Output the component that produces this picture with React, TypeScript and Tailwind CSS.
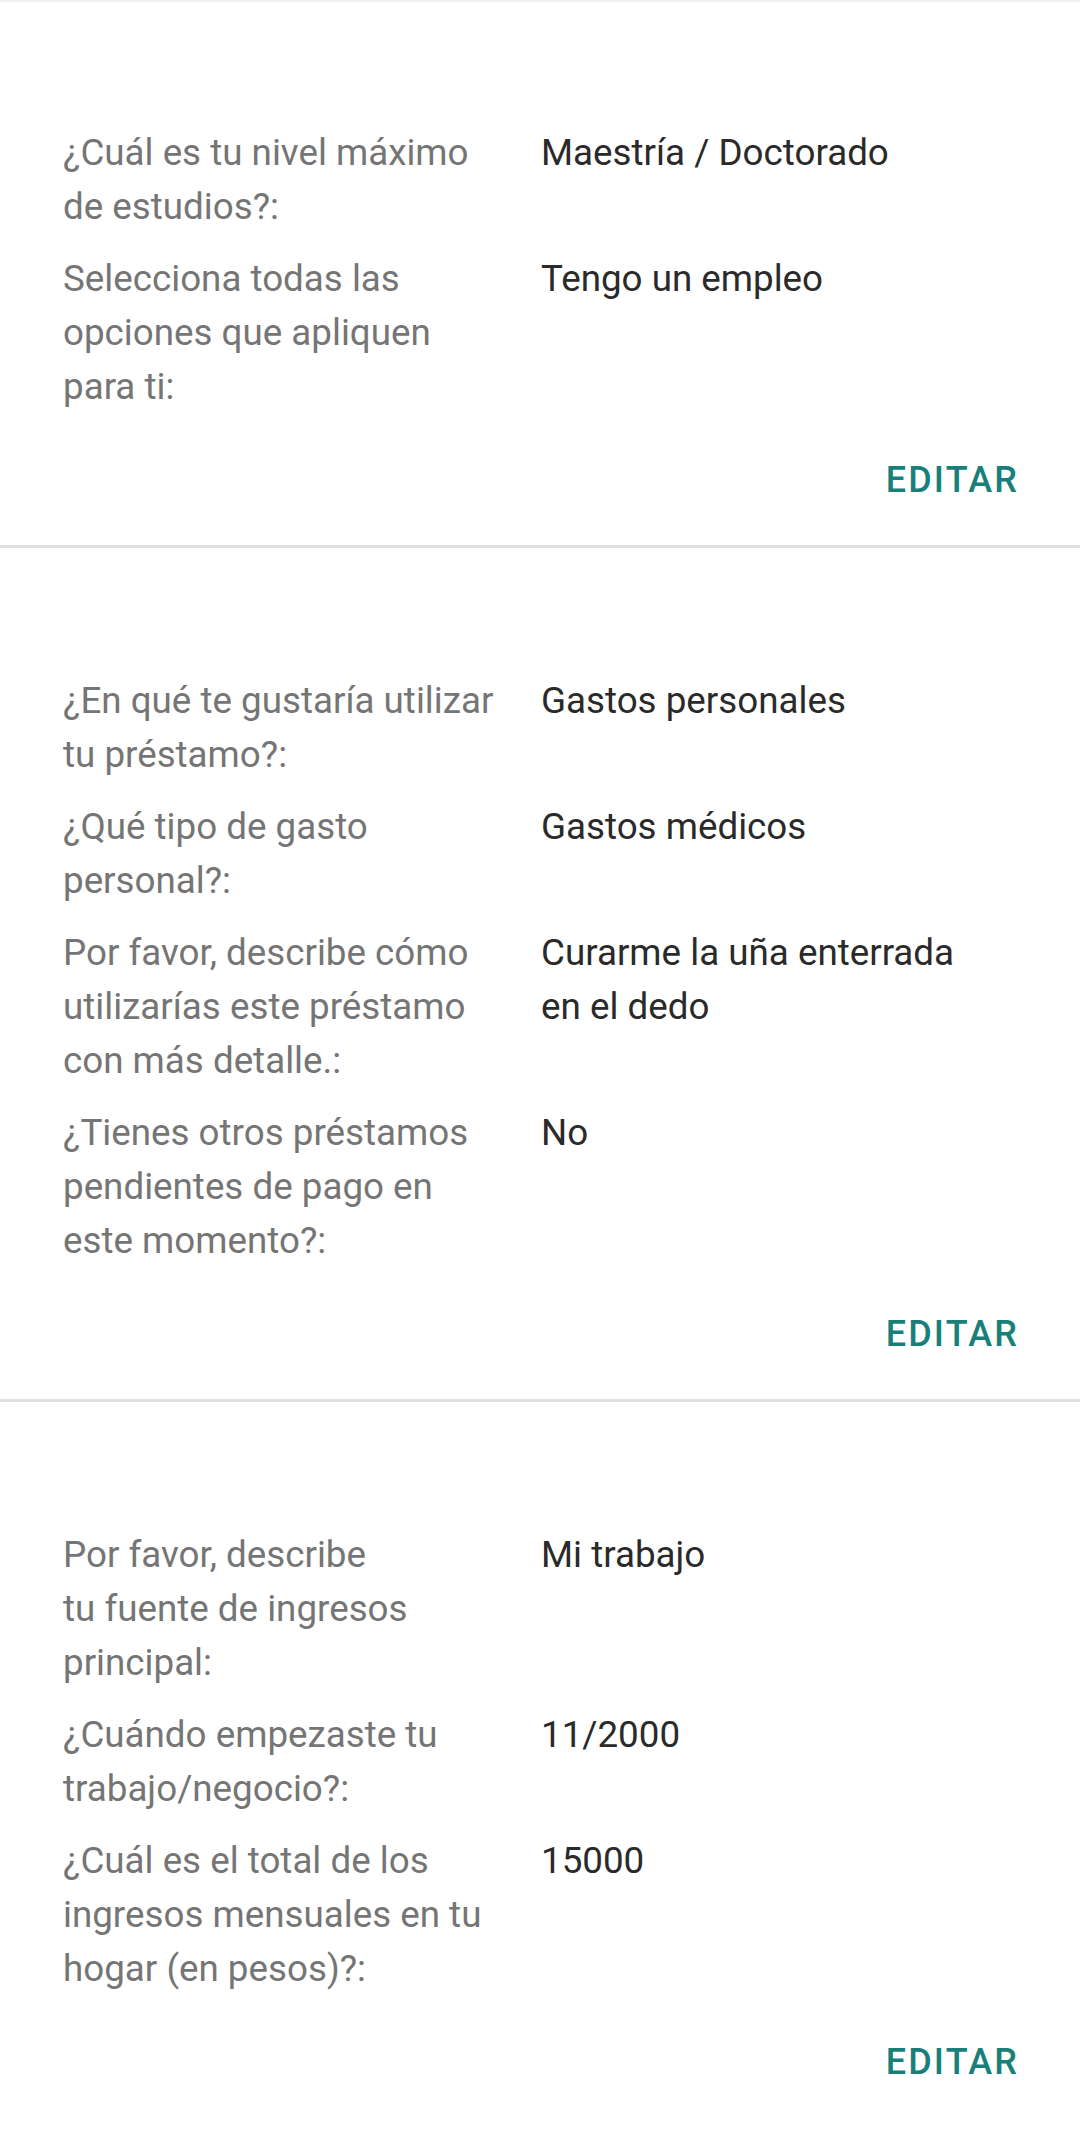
import React from 'react';

type Row = { label: React.ReactNode; value: string };

const sections: Row[][] = [
  [
    { label: '¿Cuál es tu nivel máximo de estudios?:', value: 'Maestría / Doctorado' },
    { label: 'Selecciona todas las opciones que apliquen para ti:', value: 'Tengo un empleo' },
  ],
  [
    { label: '¿En qué te gustaría utilizar tu préstamo?:', value: 'Gastos personales' },
    { label: '¿Qué tipo de gasto personal?:', value: 'Gastos médicos' },
    {
      label: 'Por favor, describe cómo utilizarías este préstamo con más detalle.:',
      value: 'Curarme la uña enterrada en el dedo',
    },
    { label: '¿Tienes otros préstamos pendientes de pago en este momento?:', value: 'No' },
  ],
  [
    {
      label: (
        <>
          Por favor, describe
          <br />
          tu fuente de ingresos principal:
        </>
      ),
      value: 'Mi trabajo',
    },
    { label: '¿Cuándo empezaste tu trabajo/negocio?:', value: '11/2000' },
    {
      label: '¿Cuál es el total de los ingresos mensuales en tu hogar (en pesos)?:',
      value: '15000',
    },
  ],
];

function SummarySection({ rows, last }: { rows: Row[]; last?: boolean }) {
  return (
    <section
      className={
        last
          ? 'px-[63px] pt-[126px] pb-[41px]'
          : 'border-b-[3px] border-[#e0e0e0] px-[63px] pt-[126px] pb-[38px]'
      }
    >
      <div className="flex flex-col gap-[18px]">
        {rows.map((row, idx) => (
          <div key={idx} className="flex text-[36.75px] leading-[54px]">
            <div className="mr-[41px] w-[437px] shrink-0 text-[#757575]">{row.label}</div>
            <div className="flex-1 pr-[40px] text-[#2a2a2a]">{row.value}</div>
          </div>
        ))}
      </div>

      <div className="mt-[39px] flex justify-end">
        <button className="mr-[-2px] text-[36px] leading-[54px] font-medium tracking-[0.06em] text-[#187f7a]">
          EDITAR
        </button>
      </div>
    </section>
  );
}

export default function App() {
  return (
    <div className="min-h-[2130px] w-[1080px] bg-white font-['Roboto',sans-serif]">
      {/* faint top edge */}
      <div className="h-[3px] bg-gradient-to-b from-[#ececec] to-white" />
      <div className="-mt-[3px]">
        {sections.map((rows, i) => (
          <SummarySection key={i} rows={rows} last={i === sections.length - 1} />
        ))}
      </div>
    </div>
  );
}
